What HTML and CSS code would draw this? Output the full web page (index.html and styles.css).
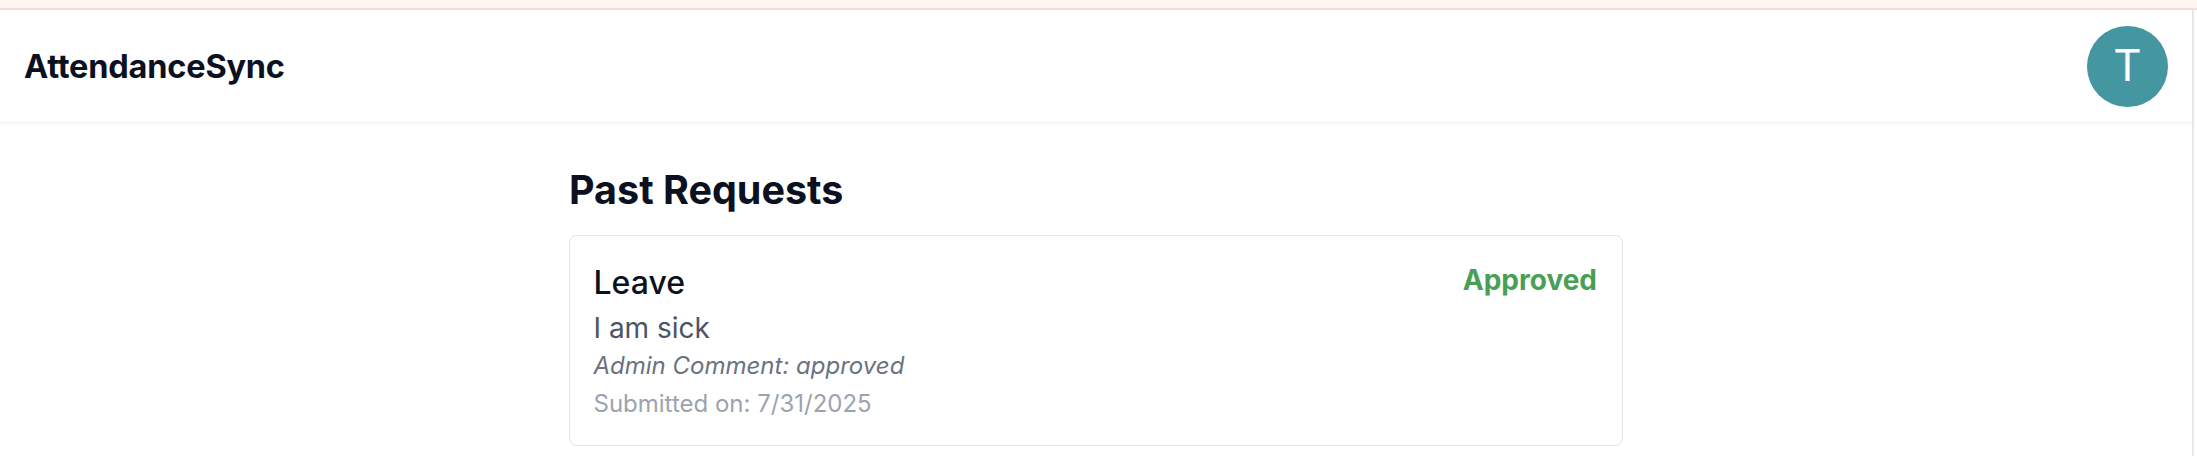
FILE: index.html
```html
<!DOCTYPE html>
<html lang="en">
<head>
<meta charset="utf-8">
<title>AttendanceSync</title>
<link rel="stylesheet" href="styles.css">
</head>
<body>
<div class="topstrip"></div>
<div class="frame">
  <div class="page">
    <header class="appbar">
      <div class="logo">AttendanceSync</div>
      <div class="avatar">T</div>
    </header>
    <main class="content">
      <h2 class="section-title">Past Requests</h2>
      <div class="card">
        <div class="card-head">
          <div class="req-type">Leave</div>
          <div class="status approved">Approved</div>
        </div>
        <div class="reason">I am sick</div>
        <div class="comment">Admin Comment: approved</div>
        <div class="submitted">Submitted on: 7/31/2025</div>
      </div>
    </main>
  </div>
  <div class="gutter"></div>
</div>
</body>
</html>
```

FILE: styles.css
```css
* { box-sizing: border-box; }
html, body { margin: 0; padding: 0; background: #ffffff; }
body { font-family: Inter, "Noto Sans", sans-serif; color: #0b1120; }

.topstrip {
  height: 10px;
  background: #fff6f2;
  border-bottom: 2px solid #f4dcdc;
}

.frame { display: flex; height: 446px; }
.page {
  width: 2194px;
  border-right: 2px solid #e8e8e8;
}
.gutter { width: 3px; background: #ffffff; }

.appbar {
  height: 113px;
  display: flex;
  align-items: center;
  justify-content: space-between;
  padding: 0 24px 0 24px;
  border-bottom: 1px solid #f1f1f1;
  box-shadow: 0 1px 2px rgba(0,0,0,0.03);
}
.logo {
  font-size: 32.5px;
  font-weight: 700;
  color: #0b1120;
  letter-spacing: -0.2px;
}
.avatar {
  width: 81px;
  height: 81px;
  border-radius: 50%;
  background: #4496a1;
  color: #ffffff;
  display: flex;
  align-items: center;
  justify-content: center;
  font-family: Roboto, Inter, sans-serif;
  font-size: 44px;
  font-weight: 400;
}

.content {
  width: 1054px;
  margin: 0 auto;
  padding-top: 42px;
}
.section-title {
  margin: 0 0 20px 0;
  font-size: 39.5px;
  line-height: 50px;
  font-weight: 700;
  color: #0b1120;
}
.card {
  border: 1.5px solid #e2e6ec;
  border-radius: 8px;
  padding: 25px 25px 24px 23.5px;
  background: #ffffff;
}
.card-head {
  display: flex;
  justify-content: space-between;
  align-items: flex-start;
}
.req-type {
  font-size: 32px;
  line-height: 44.8px;
  font-weight: 500;
  color: #0b1120;
}
.status {
  font-size: 28px;
  line-height: 39.2px;
  font-weight: 700;
}
.approved { color: #48a055; }
.reason {
  font-size: 28px;
  line-height: 39.2px;
  color: #4b5563;
  margin-top: 3.5px;
}
.comment {
  font-size: 24px;
  line-height: 33.6px;
  font-style: italic;
  color: #6b7280;
}
.submitted {
  font-size: 24px;
  line-height: 33.6px;
  color: #9ca3af;
  margin-top: 5.4px;
}
```
